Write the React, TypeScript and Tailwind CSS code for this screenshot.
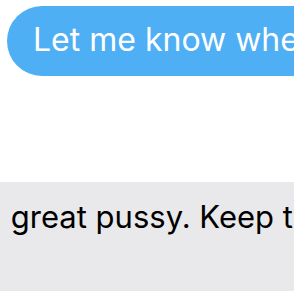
export default function App() {
  return (
    <div
      className="w-[294px] h-[295px] overflow-hidden bg-white"
      style={{ fontFamily: "Inter, 'Liberation Sans', sans-serif" }}
    >
      {/* Sent bubble */}
      <div className="pt-[6px] pl-[7px]">
        <div className="h-[70px] w-[400px] rounded-l-[35px] bg-[#4eaff5] flex items-start pt-[18px] pl-[26px]">
          <span className="text-[32px] leading-none text-white whitespace-nowrap">
            Let me know when
          </span>
        </div>
      </div>

      {/* Received bubble */}
      <div className="mt-[106px] h-[109px] bg-[#e9e9eb] flex items-start pt-[19px] overflow-hidden">
        <span className="-ml-[17px] text-[31px] leading-none text-black whitespace-nowrap">
          <span className="mr-[1px]">e</span> great pussy. Keep this
        </span>
      </div>
    </div>
  );
}
